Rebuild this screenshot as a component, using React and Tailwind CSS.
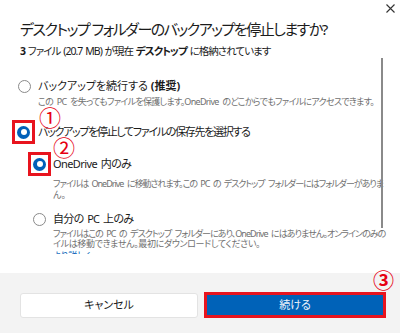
import React from "react";

const font = {
  fontFamily: '"Noto Sans", "Noto Sans CJK JP", sans-serif',
  fontFeatureSettings: '"palt"',
};

function Radio({ checked }) {
  if (checked) {
    return (
      <span className="flex h-[13px] w-[13px] shrink-0 items-center justify-center rounded-full bg-[#005fb8]">
        <span className="h-[6px] w-[6px] rounded-full bg-white" />
      </span>
    );
  }
  return <span className="h-[13px] w-[13px] shrink-0 rounded-full border border-[#8a8a8a] bg-white" />;
}

function Boxed({ children }) {
  return (
    <span className="flex h-[24px] w-[23px] shrink-0 items-center justify-center border-[3px] border-[#e8141e]">
      {children}
    </span>
  );
}

export default function App() {
  return (
    <div className="relative flex h-[333px] w-[400px] flex-col overflow-hidden bg-white text-[#1b1b1b]" style={font}>
      <svg className="absolute right-[5px] top-[4px]" width="9" height="9" viewBox="0 0 9 9">
        <path d="M0.5 0.5 L8.5 8.5 M8.5 0.5 L0.5 8.5" stroke="#333" strokeWidth="1.1" />
      </svg>

      <div className="pl-[20px] pt-[19px]">
        <div className="whitespace-nowrap text-[15px] leading-[20px] tracking-[-1.5px]">デスクトップ フォルダーのバックアップを停止しますか?</div>
        <div className="mt-[6px] whitespace-nowrap text-[10.5px] leading-[13px] tracking-[-0.95px] [word-spacing:1px]">
          <b>3</b> ファイル (20.7 MB) が現在 <b>デスクトップ</b> に格納されています
        </div>
      </div>

      <div className="relative h-[196px] overflow-hidden">
        <div className="absolute right-[17px] top-0 h-[170px] w-[2px] bg-[#8a8a8a]" />

        <div className="flex flex-col pt-[21px]">
          <div className="flex items-center gap-[7px] pl-[18px] text-[11px] leading-[14px]">
            <Radio />
            <span className="whitespace-nowrap">バックアップを続行する <b>(推奨)</b></span>
          </div>
          <div className="mt-[3px] whitespace-nowrap pl-[38px] text-[9px] leading-[12px] tracking-[-0.7px] text-[#707070] [word-spacing:2px]">
            この PC を失ってもファイルを保護します。OneDrive のどこからでもファイルにアクセスできます。
          </div>

          <div className="mt-[12px] flex items-center gap-[3px] pl-[12px] text-[11px] leading-[14px]">
            <Boxed><Radio checked /></Boxed>
            <span className="whitespace-nowrap tracking-[-1.3px]">バックアップを停止してファイルの保存先を選択する</span>
          </div>

          <div className="mt-[8px] flex items-center gap-[2px] pl-[28px] text-[11px] leading-[14px]">
            <Boxed><Radio checked /></Boxed>
            <span className="whitespace-nowrap tracking-[-0.6px] [word-spacing:1.5px]">OneDrive 内のみ</span>
          </div>
          <div className="mt-[2px] whitespace-nowrap pl-[53px] text-[9px] leading-[11px] text-[#707070] [word-spacing:2px]">
            <span className="tracking-[-1px]">ファイルは OneDrive に移動されます。この PC の デスクトップ フォルダーにはフォルダーがありま</span>
            <br />
            ん。
          </div>

          <div className="mt-[12px] flex items-center gap-[7px] pl-[33px] text-[11px] leading-[14px]">
            <Radio />
            <span className="whitespace-nowrap tracking-[-0.7px] [word-spacing:1.5px]">自分の PC 上のみ</span>
          </div>
          <div className="mt-[3px] whitespace-nowrap pl-[53px] text-[9px] leading-[10px] text-[#707070] [word-spacing:2px]">
            <span className="tracking-[-0.95px]">ファイルはこの PC の デスクトップ フォルダーにあり、OneDrive にはありません。オンラインのみの</span>
            <br />
            <span className="tracking-[-0.35px]">イルは移動できません。最初にダウンロードしてください。</span>
          </div>
          <div className="mt-[2px] pl-[53px] text-[9px] leading-[10px] text-[#005fb8]">より詳しく</div>
        </div>
      </div>

      <div className="h-[19px] bg-white" />

      <div className="relative flex flex-1 items-start gap-[6px] bg-[#f3f3f3] pl-[20px] pt-[20px]">
        <button className="h-[25px] w-[178px] rounded-[3px] border border-[#e3e3e3] bg-white text-[11px] text-[#1b1b1b]">
          キャンセル
        </button>
        <button className="-mt-[1px] h-[26px] w-[182px] border-[3px] border-[#e8141e] bg-[#0062b8] text-[11px] text-[#eef4fb]">
          続ける
        </button>
        <span className="absolute right-[6px] top-[-3px] text-[21px] font-bold leading-[21px] text-[#e60012]">③</span>
      </div>

      <span className="absolute left-[39px] top-[106px] text-[22px] leading-[22px] text-[#e60012]">①</span>
      <span className="absolute left-[53px] top-[136px] text-[22px] leading-[22px] text-[#e60012]">②</span>
    </div>
  );
}
